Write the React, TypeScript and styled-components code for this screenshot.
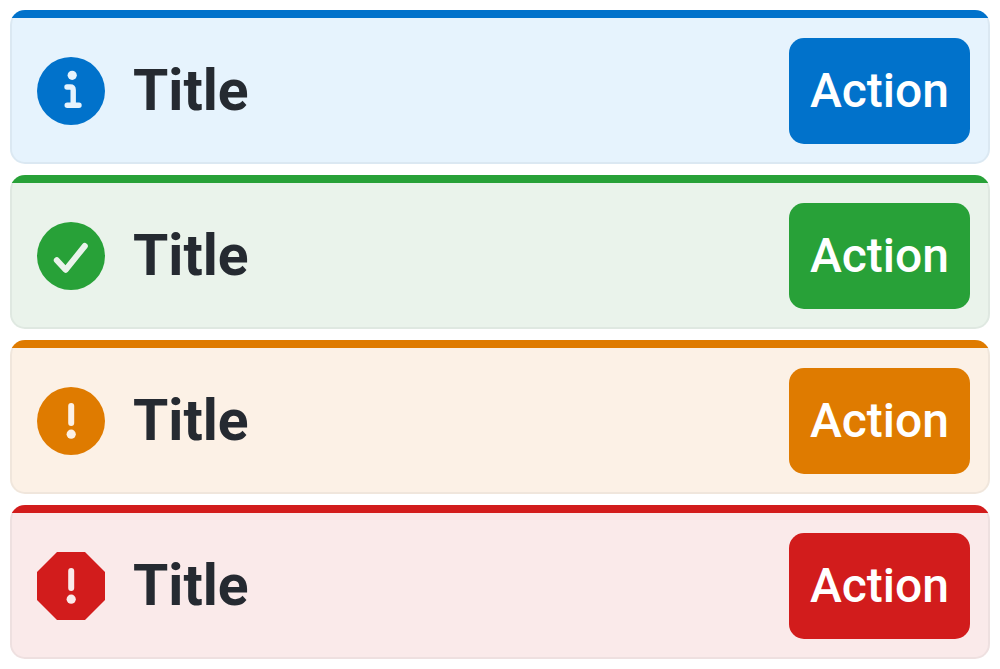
import React from "react";
import styled, { createGlobalStyle } from "styled-components";

const GlobalStyle = createGlobalStyle`
  *, *::before, *::after { box-sizing: border-box; }
  body { margin: 0; background: #ffffff; font-family: Roboto, "Liberation Sans", sans-serif; }
`;

const Stack = styled.main`
  display: flex;
  flex-direction: column;
  gap: 11px;
  padding: 10px;
`;

const Banner = styled.section<{ $accent: string; $surface: string }>`
  position: relative;
  display: flex;
  align-items: center;
  gap: 28px;
  padding: 28px 20px 20px 27px;
  border-radius: 15px;
  background: linear-gradient(${(p) => p.$accent} 8px, ${(p) => p.$surface} 8px);

  &::after {
    content: "";
    position: absolute;
    inset: 0;
    border: 2px solid rgba(33, 37, 41, 0.05);
    border-top: 0;
    border-radius: 15px;
    clip-path: inset(8px 0 0 0);
    pointer-events: none;
  }
`;

const Icon = styled.svg<{ $accent: string; $surface: string }>`
  flex: none;
  width: 68px;
  height: 68px;
  color: ${(p) => p.$accent};

  .mark { fill: ${(p) => p.$surface}; }
  .line {
    fill: none;
    stroke: ${(p) => p.$surface};
    stroke-linecap: round;
    stroke-linejoin: round;
  }
`;

const Title = styled.h2`
  flex: 1;
  margin: 0;
  color: #252a31;
  font-size: 57px;
  font-weight: 700;
  line-height: 64px;
`;

const Action = styled.button<{ $accent: string }>`
  height: 106px;
  padding: 0 21px;
  border: 0;
  border-radius: 15px;
  background: ${(p) => p.$accent};
  color: #ffffff;
  font-family: inherit;
  font-size: 48px;
  font-weight: 500;
  line-height: 56px;
  cursor: pointer;
`;

const disc = <circle cx="34" cy="34" r="34" fill="currentColor" />;
const exclamation = (
  <>
    <path className="line" d="M34.2 19V36" strokeWidth="6" />
    <circle className="mark" cx="34.2" cy="47.2" r="4.6" />
  </>
);

const banners = [
  {
    kind: "info",
    accent: "#0172cb",
    surface: "#e6f3fd",
    drawing: (
      <>
        {disc}
        <circle className="mark" cx="35.2" cy="18.3" r="4.6" />
        <path className="line" d="M30 30H33.2Q36.2 30 36.2 33V48.3M30.2 48.3H42" strokeWidth="5.4" />
      </>
    ),
  },
  {
    kind: "success",
    accent: "#28a138",
    surface: "#eaf3eb",
    drawing: (
      <>
        {disc}
        <path className="line" d="M19.8 38.3L28.6 47.8L47.8 24" strokeWidth="6" />
      </>
    ),
  },
  {
    kind: "warning",
    accent: "#df7b00",
    surface: "#fcf1e6",
    drawing: (
      <>
        {disc}
        {exclamation}
      </>
    ),
  },
  {
    kind: "critical",
    accent: "#d21c1c",
    surface: "#faeaea",
    drawing: (
      <>
        <path d="M20 0H48L68 20V48L48 68H20L0 48V20Z" fill="currentColor" />
        {exclamation}
      </>
    ),
  },
];

export default function App() {
  return (
    <>
      <GlobalStyle />
      <Stack>
        {banners.map((b) => (
          <Banner key={b.kind} $accent={b.accent} $surface={b.surface}>
            <Icon viewBox="0 0 68 68" aria-hidden="true" $accent={b.accent} $surface={b.surface}>
              {b.drawing}
            </Icon>
            <Title>Title</Title>
            <Action type="button" $accent={b.accent}>
              Action
            </Action>
          </Banner>
        ))}
      </Stack>
    </>
  );
}
